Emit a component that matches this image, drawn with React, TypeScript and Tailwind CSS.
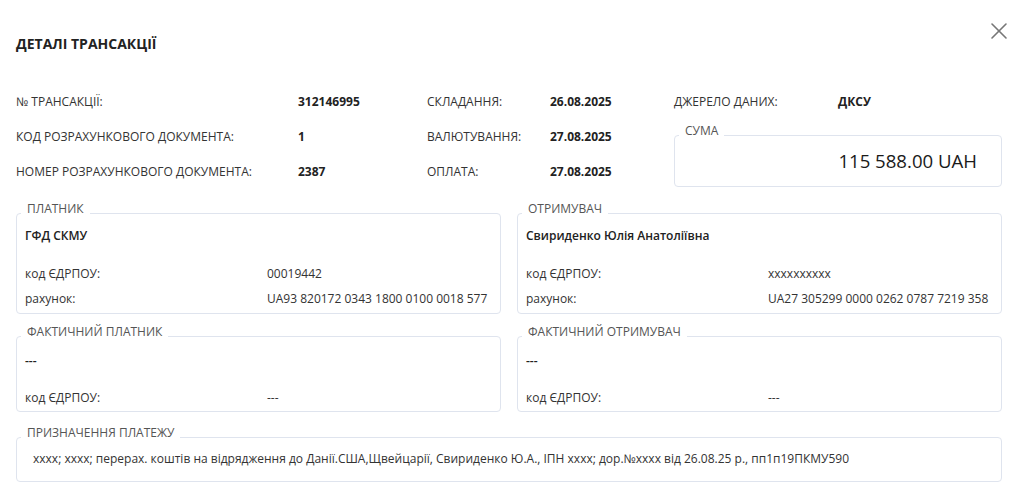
import React from 'react';
import { X } from 'lucide-react';

interface GroupProps {
  title: string;
  className?: string;
  children: React.ReactNode;
}

const Group: React.FC<GroupProps> = ({ title, className, children }) => (
  <fieldset className={`rounded border border-[#dfe4ee] ${className ?? ''}`}>
    <legend className="ml-[4px] px-[6px] pb-[8px] text-xs leading-4 text-[#555]">{title}</legend>
    {children}
  </fieldset>
);

const InfoRow: React.FC<{ label: string; value: string }> = ({ label, value }) => (
  <div className="flex h-[25px] items-center">
    <span className="w-[242px] shrink-0">{label}</span>
    <span>{value}</span>
  </div>
);

const topRows = [
  ['№ ТРАНСАКЦІЇ:', '312146995', 'СКЛАДАННЯ:', '26.08.2025'],
  ['КОД РОЗРАХУНКОВОГО ДОКУМЕНТА:', '1', 'ВАЛЮТУВАННЯ:', '27.08.2025'],
  ['НОМЕР РОЗРАХУНКОВОГО ДОКУМЕНТА:', '2387', 'ОПЛАТА:', '27.08.2025'],
];

const App: React.FC = () => {
  return (
    <div className="relative min-h-[489px] w-[1023px] bg-white pl-4 pr-[21px] font-['Open_Sans',sans-serif] text-xs text-[#333]">
      <button className="absolute right-[10px] top-[17px] text-[#777]">
        <X size={28} strokeWidth={1.4} />
      </button>

      <h2 className="pt-[34px] text-sm leading-5 font-bold text-[#222]">ДЕТАЛІ ТРАНСАКЦІЇ</h2>

      <div className="mt-[30px] flex">
        <div className="grid w-[658px] auto-rows-[35px] grid-cols-[282px_129px_123px_1fr] items-center">
          {topRows.map((row) => (
            <React.Fragment key={row[0]}>
              <span>{row[0]}</span>
              <span className="font-bold text-[#222]">{row[1]}</span>
              <span>{row[2]}</span>
              <span className="font-bold text-[#222]">{row[3]}</span>
            </React.Fragment>
          ))}
        </div>

        <div className="flex-1">
          <div className="flex h-[35px] items-center">
            <span className="w-[164px]">ДЖЕРЕЛО ДАНИХ:</span>
            <span className="font-bold text-[#222]">ДКСУ</span>
          </div>
          <Group title="СУМА" className="mt-[4px]">
            <div className="pb-[11px] pr-[24px] text-right text-[18.6px] leading-7 font-medium text-[#1a1a1a]">
              115 588.00 UAH
            </div>
          </Group>
        </div>
      </div>

      <div className="mt-[12px] grid grid-cols-2 gap-x-4">
        <Group title="ПЛАТНИК">
          <div className="px-2 pb-[2px]">
            <div className="pt-[1px] leading-5 font-semibold text-[#222]">ГФД СКМУ</div>
            <div className="mt-[15px]">
              <InfoRow label="код ЄДРПОУ:" value="00019442" />
              <InfoRow label="рахунок:" value="UA93 820172 0343 1800 0100 0018 577" />
            </div>
          </div>
        </Group>

        <Group title="ОТРИМУВАЧ">
          <div className="px-2 pb-[2px]">
            <div className="pt-[1px] leading-5 font-semibold text-[#222]">Свириденко Юлія Анатоліївна</div>
            <div className="mt-[15px]">
              <InfoRow label="код ЄДРПОУ:" value="xxxxxxxxxx" />
              <InfoRow label="рахунок:" value="UA27 305299 0000 0262 0787 7219 358" />
            </div>
          </div>
        </Group>

        <Group title="ФАКТИЧНИЙ ПЛАТНИК" className="mt-[10px]">
          <div className="px-2 pb-[1px]">
            <div className="pt-[3px] leading-5 font-semibold text-[#222]">---</div>
            <div className="mt-[14px]">
              <InfoRow label="код ЄДРПОУ:" value="---" />
            </div>
          </div>
        </Group>

        <Group title="ФАКТИЧНИЙ ОТРИМУВАЧ" className="mt-[10px]">
          <div className="px-2 pb-[1px]">
            <div className="pt-[3px] leading-5 font-semibold text-[#222]">---</div>
            <div className="mt-[14px]">
              <InfoRow label="код ЄДРПОУ:" value="---" />
            </div>
          </div>
        </Group>
      </div>

      <Group title="ПРИЗНАЧЕННЯ ПЛАТЕЖУ" className="mt-[13px]">
        <div className="pb-[14px] pl-4 pt-[2px] leading-4">
          xxxx; xxxx; перерах. коштів на відрядження до Данії.США,Щвейцарії, Свириденко Ю.А., ІПН xxxx; дор.№xxxx від 26.08.25 р., пп1п19ПКМУ590
        </div>
      </Group>
    </div>
  );
};

export default App;
